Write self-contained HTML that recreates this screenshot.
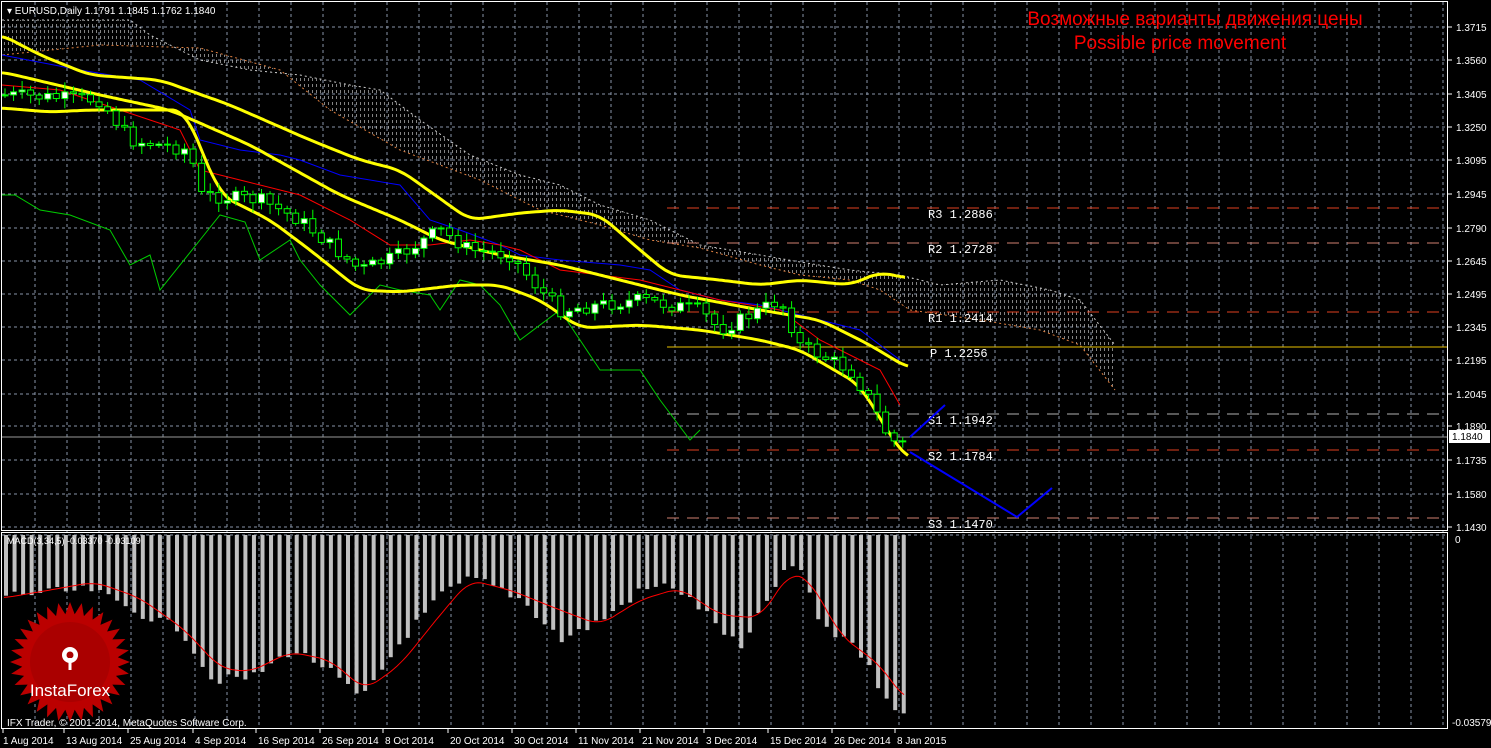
<!DOCTYPE html>
<html><head><meta charset="utf-8"><style>
html,body{margin:0;padding:0;background:#000;width:1491px;height:748px;overflow:hidden}
svg{display:block}
text{font-family:"Liberation Sans",sans-serif}
</style></head><body>
<svg id="s" width="1491" height="748" xmlns="http://www.w3.org/2000/svg">
<defs>
<pattern id="vp" width="4" height="6" patternUnits="userSpaceOnUse"><rect x="0" y="0" width="1" height="3" fill="#bbb"/></pattern>
</defs>
<rect width="1491" height="748" fill="#000"/>
<g id="grid"></g>
<g id="cloud"></g>
<g id="piv"></g>
<g id="lines"></g>
<g id="candles"></g>
<g id="macd"></g>
<rect x="1.5" y="1.5" width="1446" height="529" fill="none" stroke="#fff"/>
<rect x="1.5" y="532.5" width="1446" height="196" fill="none" stroke="#fff"/>
<g transform="translate(70,662)">
<polygon id="star" fill="#b00"/>
<circle r="40" fill="#900" opacity="0.5"/>
<g fill="#fff"><circle cx="0" cy="-7" r="8"/><circle cx="0" cy="-7" r="3.5" fill="#a00"/><rect x="-1.5" y="-4" width="3" height="12"/></g>
<text x="0" y="34" fill="#fff" font-size="17" text-anchor="middle">InstaForex</text>
</g>
<text x="7" y="726" fill="#fff" font-size="10">IFX Trader, © 2001-2014, MetaQuotes Software Corp.</text>
<text x="7" y="14" fill="#fff" font-size="10">▾ EURUSD,Daily  1.1791 1.1845 1.1762 1.1840</text>
<text x="7" y="544" fill="#fff" font-size="9">MACD(3,34,5) -0.03370 -0.03109</text>
<text x="1195" y="25" fill="#f00" font-size="19" text-anchor="middle">Возможные варианты движения цены</text>
<text x="1180" y="49" fill="#f00" font-size="19" text-anchor="middle">Possible price movement</text>
<g id="axis"></g>
<polyline points="910,437 945,405" stroke="#00f" stroke-width="2" fill="none"/>
<polyline points="910,452 1017,517 1052,488" stroke="#00f" stroke-width="2" fill="none"/>
</svg>
<script>
(function(){
var NS="http://www.w3.org/2000/svg";
function el(p,t,a){var e=document.createElementNS(NS,t);for(var k in a)e.setAttribute(k,a[k]);document.getElementById(p).appendChild(e);return e;}
function txt(p,x,y,s,a){var e=el(p,"text",Object.assign({x:x,y:y},a));e.textContent=s;return e;}
function pts(a){return a.map(function(p){return p.join(",")}).join(" ");}
function interp(a,x){for(var i=0;i<a.length-1;i++){if(x>=a[i][0]&&x<=a[i+1][0]){var t=(x-a[i][0])/(a[i+1][0]-a[i][0]);return a[i][1]+t*(a[i+1][1]-a[i][1]);}}return x<a[0][0]?a[0][1]:a[a.length-1][1];}
function smooth(a){var r=[];for(var x=a[0][0];x<=a[a.length-1][0];x+=3){var s=0,n=0;for(var d=-12;d<=12;d+=3){s+=interp(a,Math.min(Math.max(x+d,a[0][0]),a[a.length-1][0]));n++;}r.push([x,(s/n).toFixed(1)]);}return r;}
var hy=[27,60,94,127,160,194,228,261,294,327,360,394,426,460,494,527];
var pl=["1.3715","1.3560","1.3405","1.3250","1.3095","1.2945","1.2790","1.2645","1.2495","1.2345","1.2195","1.2045","1.1890","1.1735","1.1580","1.1430"];
hy.forEach(function(y,i){el("grid","line",{x1:2,x2:1447,y1:y,y2:y,stroke:"#8894a8","stroke-dasharray":"3,3","stroke-width":1});
el("axis","line",{x1:1448,x2:1452,y1:y,y2:y,stroke:"#fff"});txt("axis",1456,y+4,pl[i],{fill:"#fff","font-size":"10"});});
for(var x=35;x<1447;x+=32){el("grid","line",{x1:x,x2:x,y1:2,y2:728,stroke:"#8894a8","stroke-dasharray":"3,3"});}
el("grid","line",{x1:2,x2:1447,y1:535,y2:535,stroke:"#8894a8","stroke-dasharray":"3,3"});
txt("axis",1455,543,"0",{fill:"#fff","font-size":"10"});
txt("axis",1452,726,"-0.03579",{fill:"#fff","font-size":"10"});
var dl=[["1 Aug 2014",3],["13 Aug 2014",66],["25 Aug 2014",130],["4 Sep 2014",195],["16 Sep 2014",258],["26 Sep 2014",322],["8 Oct 2014",385],["20 Oct 2014",450],["30 Oct 2014",514],["11 Nov 2014",578],["21 Nov 2014",642],["3 Dec 2014",706],["15 Dec 2014",770],["26 Dec 2014",834],["8 Jan 2015",897]];
dl.forEach(function(d,i){var lx=i==0?3:d[1]-2;el("axis","line",{x1:lx,x2:lx,y1:729,y2:733,stroke:"#fff"});txt("axis",d[1],744,d[0],{fill:"#fff","font-size":"10"});});
el("piv","line",{x1:2,x2:1448,y1:437,y2:437,stroke:"#999"});
el("axis","rect",{x:1449,y:430,width:41,height:13,fill:"#fff"});
txt("axis",1452,440,"1.1840",{fill:"#000","font-size":"10"});
[[208,"#e04020","R3 1.2886"],[243,"#d08070","R2 1.2728"],[312,"#e04020","R1 1.2414"],[414,"#b0b0b0","S1 1.1942"],[450,"#e04020","S2 1.1784"],[518,"#d08070","S3 1.1470"]].forEach(function(p){
el("piv","line",{x1:667,x2:1448,y1:p[0],y2:p[0],stroke:p[1],"stroke-dasharray":"12,8"});
txt("piv",928,p[0]+10,p[2],{fill:"#fff","font-size":"12",style:"font-family:'Liberation Mono',monospace"});});
el("piv","line",{x1:667,x2:1448,y1:347,y2:347,stroke:"#e8c000"});
txt("piv",930,357,"P  1.2256",{fill:"#fff","font-size":"12",style:"font-family:'Liberation Mono',monospace"});
var ctop=[[2,20],[130,20],[150,35],[200,60],[250,70],[300,75],[350,85],[380,90],[420,120],[470,155],[520,175],[560,185],[600,205],[650,220],[700,245],[760,255],[800,262],[850,270],[900,275],[940,285],[1000,280],[1050,290],[1080,300],[1115,345]];
var cbot=[[2,55],[100,45],[200,48],[280,70],[330,110],[400,150],[480,180],[540,210],[600,225],[650,240],[700,248],[760,265],[800,275],[850,280],[880,290],[910,310],[980,320],[1040,330],[1080,345],[1115,390]];
el("cloud","polygon",{points:pts(ctop.concat(cbot.slice().reverse())),fill:"url(#vp)",opacity:"0.7"});
el("cloud","polyline",{points:pts(ctop),fill:"none",stroke:"#ccc","stroke-dasharray":"2,3"});
el("cloud","polyline",{points:pts(cbot),fill:"none",stroke:"#e08040","stroke-dasharray":"2,3"});
var Y1=[[2,35],[40,55],[90,75],[160,80],[230,105],[310,140],[360,160],[400,170],[470,220],[520,213],[560,210],[600,215],[640,250],[670,275],[720,280],[760,285],[800,280],[850,285],[880,272],[905,278]];
var Y2=[[2,72],[100,95],[170,110],[250,145],[340,195],[400,220],[440,240],[500,255],[560,265],[620,280],[680,295],[760,310],[820,320],[870,345],[908,368]];
var Y3=[[2,108],[50,112],[90,110],[185,110],[220,195],[270,220],[310,250],[360,290],[400,292],[460,285],[500,285],[540,300],[580,328],[640,325],[700,330],[760,340],[800,350],[860,385],[890,435],[908,460]];
var BL=[[2,55],[80,70],[140,80],[190,110],[200,140],[240,150],[280,155],[300,160],[340,175],[400,185],[430,220],[460,230],[500,245],[520,255],[560,260],[620,265],[650,270],[680,290],[720,300],[760,305],[820,320],[860,330],[900,360]];
var RL=[[2,85],[60,90],[120,110],[180,130],[200,170],[240,180],[300,195],[350,220],[390,245],[430,245],[470,240],[500,245],[520,250],[560,270],[640,280],[680,290],[720,300],[780,310],[820,340],[860,360],[880,370],[900,405]];
var GL=[[2,195],[15,195],[40,210],[70,215],[110,230],[130,265],[150,255],[160,290],[200,240],[220,215],[245,222],[260,260],[290,240],[300,260],[320,285],[350,315],[380,285],[400,290],[430,295],[440,310],[460,280],[480,285],[500,305],[520,340],[560,310],[600,370],[640,370],[660,400],[690,440],[700,430]];
el("lines","polyline",{points:pts(GL),fill:"none",stroke:"#0c0"});
el("lines","polyline",{points:pts(BL),fill:"none",stroke:"#00f"});
el("lines","polyline",{points:pts(RL),fill:"none",stroke:"#f00"});
[Y1,Y2,Y3].forEach(function(a){el("lines","polyline",{points:pts(smooth(a)),fill:"none",stroke:"#ff0","stroke-width":3});});
var CP=[[5,95],[100,100],[130,140],[190,150],[200,195],[260,200],[300,220],[360,270],[400,255],[440,230],[470,250],[510,255],[540,290],[560,310],[640,300],[700,310],[720,330],[780,300],[800,345],[850,370],[870,400],[890,440],[905,445]];
var seed=7;function rnd(){seed=(seed*9301+49297)%233280;return seed/233280;}
var prev=95;
for(var i=0;i<106;i++){var cx=5+i*8.55;var c=interp(CP,cx)+(rnd()-0.5)*14;var o=prev;prev=c;
var hi=Math.min(o,c)-rnd()*8-2,lo=Math.max(o,c)+rnd()*8+2;
el("candles","line",{x1:cx,x2:cx,y1:hi,y2:lo,stroke:"#0f0"});
var bt=Math.min(o,c),bh=Math.max(Math.abs(o-c),1);
el("candles","rect",{x:cx-3,y:bt,width:6,height:bh,fill:c<o?"#fff":"#000",stroke:"#0f0"});}
var MB=[[4,595],[90,590],[130,610],[180,630],[210,680],[250,678],[290,650],[320,665],[360,700],[400,640],[440,595],[470,578],[500,590],[520,600],[560,640],[600,620],[640,590],[670,585],[700,610],[740,650],[780,572],[800,570],[820,630],[850,640],[880,690],[905,720]];
for(var i=0;i<106;i++){var mx=4+i*8.55;var b=interp(MB,mx)+(rnd()-0.5)*10;el("macd","rect",{x:mx,y:535,width:4,height:b-535,fill:"#c0c0c0"});}
var SG=[[4,598],[50,590],[95,582],[140,598],[185,630],[220,668],[250,672],[290,652],[330,660],[365,690],[400,665],[440,615],[470,580],[510,590],[560,610],[600,625],[640,600],[680,588],[720,615],[760,618],[790,572],[810,580],[840,635],[880,665],[905,700]];
el("macd","polyline",{points:pts(smooth(SG)),fill:"none",stroke:"#f00"});
var sp=[];for(var k=0;k<64;k++){var r=k%2?48:60;var a=k*Math.PI/32;sp.push([Math.cos(a)*r,Math.sin(a)*r]);}
document.getElementById("star").setAttribute("points",pts(sp));
})();
</script>
</body></html>
